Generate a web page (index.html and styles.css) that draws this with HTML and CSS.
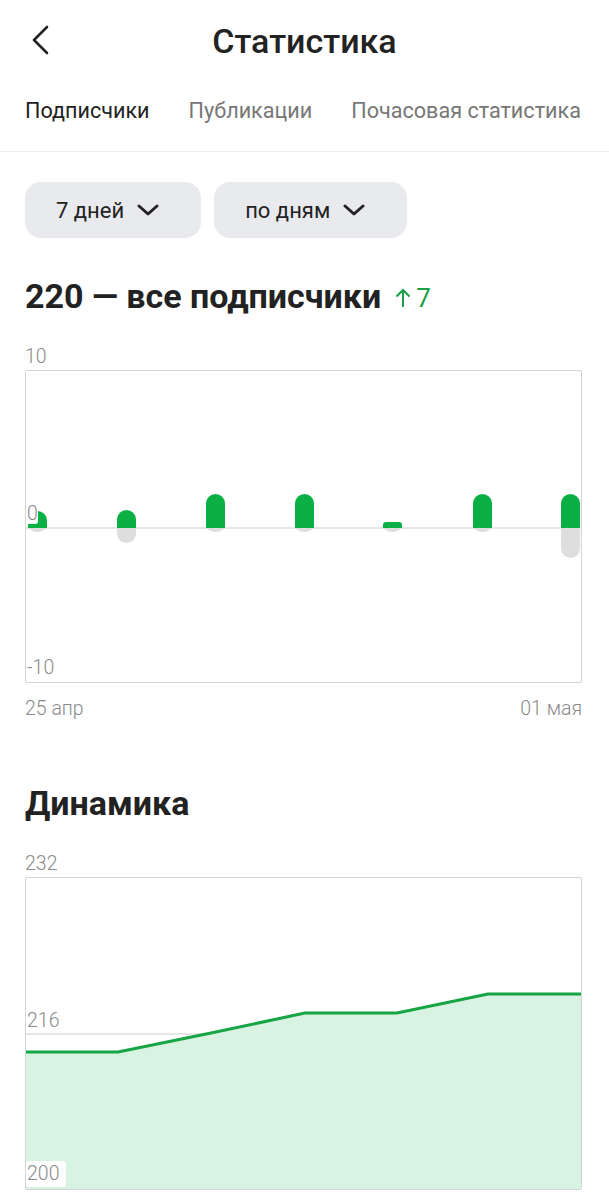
FILE: index.html
```html
<!DOCTYPE html>
<html lang="ru">
<head>
    <meta charset="UTF-8">
    <meta name="viewport" content="width=device-width, initial-scale=1.0">
    <title>Статистика</title>
    <link rel="stylesheet" href="styles.css">
</head>
<body>
    <header class="topbar">
        <button class="back" aria-label="Назад">
            <svg width="24" height="30" viewBox="0 0 24 30"><path d="M17 2 L4 15 L17 28" fill="none" stroke="#222" stroke-width="2.6" stroke-linecap="round" stroke-linejoin="round"/></svg>
        </button>
        <h1>Статистика</h1>
    </header>

    <nav class="tabs">
        <span class="tab active">Подписчики</span>
        <span class="tab">Публикации</span>
        <span class="tab">Почасовая статистика</span>
    </nav>

    <main class="content">
        <div class="filters">
            <button class="select">7 дней
                <svg width="22" height="14" viewBox="0 0 22 14"><path d="M2 3 L11 11 L20 3" fill="none" stroke="#222" stroke-width="3" stroke-linecap="round" stroke-linejoin="round"/></svg>
            </button>
            <button class="select">по дням
                <svg width="22" height="14" viewBox="0 0 22 14"><path d="M2 3 L11 11 L20 3" fill="none" stroke="#222" stroke-width="3" stroke-linecap="round" stroke-linejoin="round"/></svg>
            </button>
        </div>

        <h2 class="section-title">220 — все подписчики
            <span class="delta">
                <svg width="16" height="20" viewBox="0 0 16 20"><path d="M8 19 V2 M1.5 8.5 L8 2 L14.5 8.5" fill="none" stroke="#1a9f45" stroke-width="2"/></svg>7
            </span>
        </h2>

        <div class="axis-top">10</div>
        <div class="chart">
            <svg width="555" height="311" viewBox="26 371 555 311">
                <defs>
                    <clipPath id="up"><rect x="26" y="371" width="555" height="157"/></clipPath>
                    <clipPath id="down"><rect x="26" y="528" width="555" height="154"/></clipPath>
                </defs>
                <line x1="26" y1="528" x2="581" y2="528" stroke="#dedede" stroke-width="1.5"/>
                <!-- отписки -->
                <g fill="#dedede" clip-path="url(#down)">
                    <rect x="28" y="518" width="19" height="14" rx="9.5"/>
                    <rect x="117" y="518" width="19" height="25" rx="9.5"/>
                    <rect x="206" y="518" width="19" height="14" rx="9.5"/>
                    <rect x="295" y="518" width="19" height="14" rx="9.5"/>
                    <rect x="383" y="518" width="19" height="14" rx="9.5"/>
                    <rect x="473" y="518" width="19" height="14" rx="9.5"/>
                    <rect x="561" y="518" width="19" height="40" rx="9.5"/>
                </g>
                <!-- подписки -->
                <g fill="#0bb044" clip-path="url(#up)">
                    <rect x="28" y="511" width="19" height="27" rx="9.5"/>
                    <rect x="117" y="510" width="19" height="28" rx="9.5"/>
                    <rect x="206" y="494" width="19" height="44" rx="9.5"/>
                    <rect x="295" y="494" width="19" height="44" rx="9.5"/>
                    <rect x="383" y="522" width="19" height="16" rx="3"/>
                    <rect x="473" y="494" width="19" height="44" rx="9.5"/>
                    <rect x="561" y="494" width="19" height="44" rx="9.5"/>
                </g>
                <rect x="26" y="501" width="12" height="23" rx="3" fill="#fff"/>
                <text class="tick" x="27" y="520">0</text>
                <text class="tick" x="27" y="674">-10</text>
            </svg>
        </div>
        <div class="dates">
            <span>25 апр</span>
            <span>01 мая</span>
        </div>

        <h2 class="section-title dynamics">Динамика</h2>

        <div class="axis-top">232</div>
        <div class="chart">
            <svg width="555" height="311" viewBox="26 877 555 311">
                <line x1="26" y1="1033" x2="581" y2="1033" stroke="#dedede" stroke-width="1.5"/>
                <polygon points="26,1051 118,1051 211,1032 305,1012 397,1012 488,993 581,993 581,1188 26,1188" fill="#d8f3e1"/>
                <polyline points="26,1051 118,1051 211,1032 305,1012 397,1012 488,993 581,993" fill="none" stroke="#17a444" stroke-width="3" stroke-linejoin="round"/>
                <text class="tick" x="27" y="1026">216</text>
                <rect x="26" y="1160" width="40" height="26" rx="3" fill="#fff"/>
                <text class="tick" x="27" y="1179">200</text>
            </svg>
        </div>
    </main>
</body>
</html>
```

FILE: styles.css
```css
body {
    font-family: Roboto, "Noto Sans", sans-serif;
    margin: 0;
    background: #fff;
    color: #222;
}
.topbar {
    position: relative;
    height: 82px;
    display: flex;
    align-items: center;
    justify-content: center;
}
.topbar h1 {
    margin: 0;
    font-size: 34px;
    font-weight: 500;
    color: #222;
}
.back {
    position: absolute;
    left: 30px;
    top: 25px;
    padding: 0;
    border: none;
    background: none;
}
.back svg {
    display: block;
}
.tabs {
    display: flex;
    gap: 39px;
    padding: 17px 0 28px 25px;
    border-bottom: 1px solid #ececec;
    white-space: nowrap;
}
.tab {
    font-size: 21.6px;
    line-height: 24px;
    color: #777;
}
.tab.active {
    color: #222;
}
.content {
    padding: 0 27px 0 25px;
}
.filters {
    display: flex;
    gap: 13px;
    margin-top: 30px;
}
.select {
    display: flex;
    align-items: center;
    gap: 13px;
    height: 56px;
    padding: 0 42px 0 31px;
    border: none;
    border-radius: 16px;
    background: #e9eaee;
    font-family: inherit;
    font-size: 22px;
    color: #222;
}
.select svg {
    display: block;
}
.section-title {
    display: flex;
    align-items: baseline;
    height: 40px;
    margin: 38px 0 0;
    font-size: 34px;
    line-height: 40px;
    font-weight: 700;
    color: #222;
    white-space: nowrap;
}
.section-title.dynamics {
    margin-top: 64px;
}
.delta {
    display: flex;
    align-items: center;
    gap: 5px;
    margin-left: 14px;
    font-size: 26px;
    font-weight: 400;
    color: #1a9f45;
}
.delta svg {
    display: block;
}
.axis-top {
    margin-top: 31px;
    font-size: 19.5px;
    line-height: 20px;
    font-weight: 300;
    color: #8a8a8a;
}
.chart {
    margin-top: 3px;
    border: 1px solid #d4d4d4;
    border-radius: 2px;
}
.chart svg {
    display: block;
}
.tick {
    font-family: Roboto, sans-serif;
    font-size: 19.5px;
    font-weight: 300;
    fill: #8a8a8a;
}
.dates {
    display: flex;
    justify-content: space-between;
    margin-top: 16px;
    font-size: 19.5px;
    line-height: 20px;
    font-weight: 300;
    color: #8a8a8a;
}
```
